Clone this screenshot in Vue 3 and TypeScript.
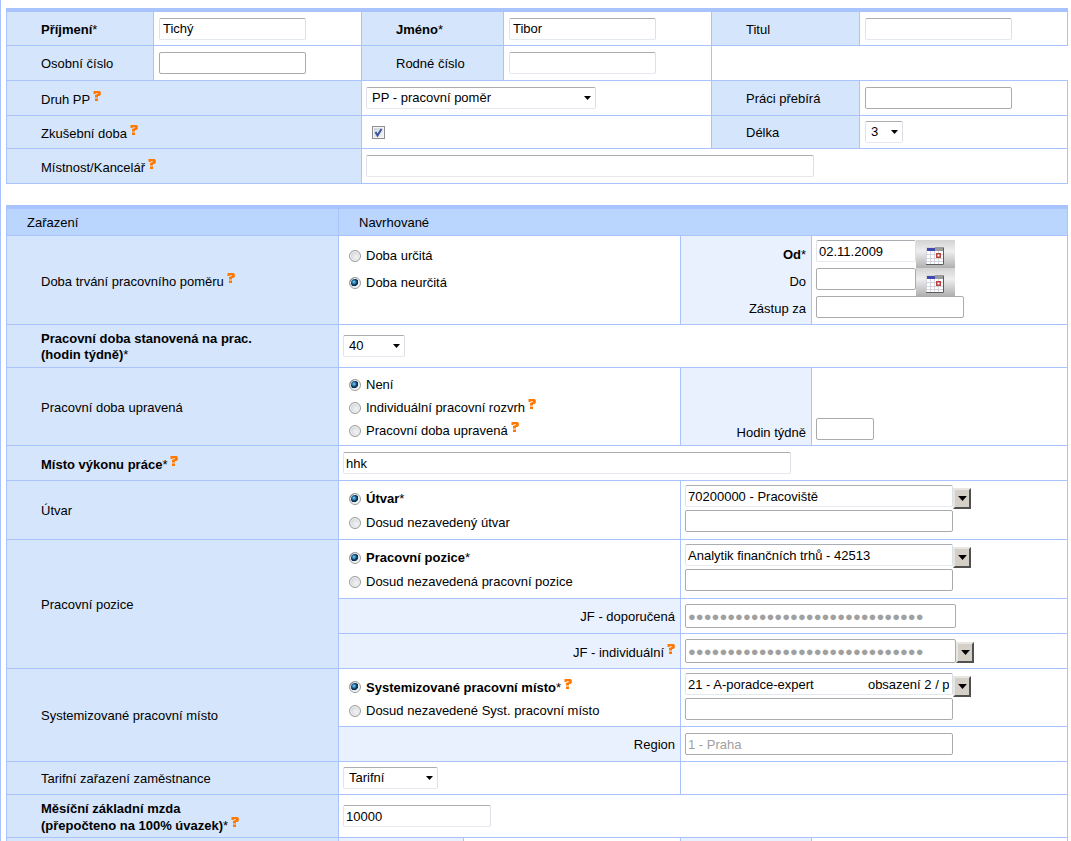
<script setup lang="ts">
import { defineComponent, h, reactive } from 'vue'

interface Option {
  value: string
  label: string
}

const form = reactive({
  surname: 'Tichý',
  firstName: 'Tibor',
  title: '',
  personalNumber: '',
  birthNumber: '',
  contractType: 'pp',
  takesOverFrom: '',
  trial: true,
  trialLength: '3',
  room: '',
  duration: 'indefinite',
  from: '02.11.2009',
  to: '',
  substituteFor: '',
  weeklyHours: '40',
  adjustment: 'none',
  adjustedHours: '',
  workplace: 'hhk',
  unitMode: 'existing',
  unit: '70200000 - Pracoviště',
  newUnit: '',
  positionMode: 'existing',
  position: 'Analytik finančních trhů - 42513',
  newPosition: '',
  slotMode: 'existing',
  slot: '21 - A-poradce-expert' + '\u00a0'.repeat(15) + 'obsazení 2 / plán 3',
  newSlot: '',
  region: '1 - Praha',
  tariff: 'tariff',
  salary: '10000',
})

const masked = '●'.repeat(30)

const contractTypes: Option[] = [{ value: 'pp', label: 'PP - pracovní poměr' }]
const trialLengths: Option[] = [1, 2, 3].map((n) => ({ value: String(n), label: String(n) }))
const hourOptions: Option[] = [20, 30, 40].map((n) => ({ value: String(n), label: String(n) }))
const tariffs: Option[] = [{ value: 'tariff', label: 'Tarifní' }]

const HelpMark = defineComponent({
  setup: () => () =>
    h('svg', { class: 'help', viewBox: '0 0 8 10', width: 8, height: 10, 'aria-label': 'Nápověda' }, [
      h('path', { d: 'M0.5 0H6.6L7.8 1V3.8L6.6 5H5V6.4H2V4L4.8 3V2.2H2.6V3H0.5ZM2 7.4H5V10H2Z', fill: '#ff7800' }),
    ]),
})

const CalendarIcon = defineComponent({
  setup: () => () =>
    h('svg', { class: 'calendar', viewBox: '0 0 19 18', width: 19, height: 18, 'aria-hidden': 'true' }, [
      h('path', { d: 'M0 0H18V18H0Z', fill: '#fff' }),
      h('path', { d: 'M1 1H9V4H1Z', fill: '#3f48b0' }),
      h('path', { d: 'M9 0H18V4H9Z', fill: '#9b9b9b' }),
      h('path', { d: 'M0 7.5H17M0 11.5H17M0 14.5H17M4.5 4V17M8.5 4V17M12.5 4V17M0.5 0V17M0 0.5H9', stroke: '#d4d4dc', fill: 'none' }),
      h('path', { d: 'M17.5 1V17.5H0', stroke: '#5c5c5c', 'stroke-width': 1, fill: 'none' }),
      h('path', { d: 'M10.75 6.75H14.25V10.25H10.75Z', stroke: '#b8433f', 'stroke-width': 1.5, fill: '#fff' }),
    ]),
})

const Arrow = defineComponent({
  setup: () => () =>
    h('svg', { class: 'arrow', viewBox: '0 0 7 4', width: 7, height: 4, 'aria-hidden': 'true' }, [
      h('path', { d: 'M0 0H7L3.5 4Z', fill: '#000' }),
    ]),
})
</script>

<template>
  <main class="page">
    <form @submit.prevent>
      <section class="sheet person">
        <label class="cell name" for="surname"><span><b>Příjmení</b>*</span></label>
        <div class="cell value inset"><input id="surname" v-model="form.surname" class="box w-mid soft" type="text" /></div>
        <label class="cell name" for="first"><span><b>Jméno</b>*</span></label>
        <div class="cell value inset"><input id="first" v-model="form.firstName" class="box w-mid soft" type="text" /></div>
        <label class="cell name" for="title">Titul</label>
        <div class="cell value inset"><input id="title" v-model="form.title" class="box w-mid soft" type="text" /></div>

        <label class="cell name" for="number">Osobní číslo</label>
        <div class="cell value inset"><input id="number" v-model="form.personalNumber" class="box w-mid" type="text" /></div>
        <label class="cell name" for="birth">Rodné číslo</label>
        <div class="cell value inset"><input id="birth" v-model="form.birthNumber" class="box w-mid soft" type="text" /></div>
        <div class="cell value open span-2"></div>

        <label class="cell name span-2" for="contract"><span>Druh PP<HelpMark /></span></label>
        <div class="cell value span-2">
          <span class="pick w-contract">
            <select id="contract" v-model="form.contractType">
              <option v-for="o in contractTypes" :key="o.value" :value="o.value">{{ o.label }}</option>
            </select>
            <Arrow />
          </span>
        </div>
        <label class="cell name" for="takes">Práci přebírá</label>
        <div class="cell value inset"><input id="takes" v-model="form.takesOverFrom" class="box w-mid" type="text" /></div>

        <label class="cell name span-2" for="trial"><span>Zkušební doba<HelpMark /></span></label>
        <div class="cell value span-2">
          <span class="tick">
            <input id="trial" v-model="form.trial" type="checkbox" />
            <svg v-if="form.trial" viewBox="0 0 13 13" width="13" height="13" aria-hidden="true">
              <path d="M3.5 6L5.5 9.5L9.5 3" fill="none" stroke="#3b5599" stroke-width="2" />
            </svg>
          </span>
        </div>
        <label class="cell name" for="length">Délka</label>
        <div class="cell value inset">
          <span class="pick w-length">
            <select id="length" v-model="form.trialLength">
              <option v-for="o in trialLengths" :key="o.value" :value="o.value">{{ o.label }}</option>
            </select>
            <Arrow />
          </span>
        </div>

        <label class="cell name span-2" for="room"><span>Místnost/Kancelář<HelpMark /></span></label>
        <div class="cell value span-4"><input id="room" v-model="form.room" class="box w-wide soft" type="text" /></div>
      </section>

      <section class="sheet placement">
        <div class="cell head">Zařazení</div>
        <div class="cell head span-4">Navrhované</div>

        <div class="cell name"><span>Doba trvání pracovního poměru<HelpMark /></span></div>
        <div class="cell choices airy span-2">
          <label><input v-model="form.duration" type="radio" name="duration" value="fixed" />Doba určitá</label>
          <label><input v-model="form.duration" type="radio" name="duration" value="indefinite" />Doba neurčitá</label>
        </div>
        <div class="cell side stack">
          <label for="from"><b>Od</b>*</label>
          <label for="to">Do</label>
          <label for="substitute">Zástup za</label>
        </div>
        <div class="cell value fields">
          <div class="joined">
            <input id="from" v-model="form.from" class="box w-date soft" type="text" />
            <button class="date" type="button" aria-label="Vybrat datum od"><CalendarIcon /></button>
          </div>
          <div class="joined">
            <input id="to" v-model="form.to" class="box w-date" type="text" />
            <button class="date" type="button" aria-label="Vybrat datum do"><CalendarIcon /></button>
          </div>
          <input id="substitute" v-model="form.substituteFor" class="box w-mid" type="text" />
        </div>

        <label class="cell name" for="hours"><span><b>Pracovní doba stanovená na prac.<br />(hodin týdně)</b>*</span></label>
        <div class="cell value span-4">
          <span class="pick w-hours">
            <select id="hours" v-model="form.weeklyHours">
              <option v-for="o in hourOptions" :key="o.value" :value="o.value">{{ o.label }}</option>
            </select>
            <Arrow />
          </span>
        </div>

        <div class="cell name">Pracovní doba upravená</div>
        <div class="cell choices dense span-2">
          <label><input v-model="form.adjustment" type="radio" name="adjust" value="none" />Není</label>
          <label><input v-model="form.adjustment" type="radio" name="adjust" value="individual" /><span>Individuální pracovní rozvrh<HelpMark /></span></label>
          <label><input v-model="form.adjustment" type="radio" name="adjust" value="adjusted" /><span>Pracovní doba upravená<HelpMark /></span></label>
        </div>
        <label class="cell side low" for="adjusted">Hodin týdně</label>
        <div class="cell value low"><input id="adjusted" v-model="form.adjustedHours" class="box w-short" type="text" /></div>

        <label class="cell name" for="place"><span><b>Místo výkonu práce</b>*<HelpMark /></span></label>
        <div class="cell value span-4"><input id="place" v-model="form.workplace" class="box w-wide soft" type="text" /></div>

        <div class="cell name">Útvar</div>
        <div class="cell choices span-2">
          <label><input v-model="form.unitMode" type="radio" name="unit" value="existing" /><span><b>Útvar</b>*</span></label>
          <label><input v-model="form.unitMode" type="radio" name="unit" value="new" />Dosud nezavedený útvar</label>
        </div>
        <div class="cell value fields span-2">
          <div class="combo">
            <input v-model="form.unit" class="box w-long soft" type="text" aria-label="Útvar" />
            <button class="drop" type="button" aria-label="Vybrat útvar"><Arrow /></button>
          </div>
          <input v-model="form.newUnit" class="box w-long" type="text" aria-label="Nezavedený útvar" />
        </div>

        <div class="cell name rows-3">Pracovní pozice</div>
        <div class="cell choices span-2">
          <label><input v-model="form.positionMode" type="radio" name="position" value="existing" /><span><b>Pracovní pozice</b>*</span></label>
          <label><input v-model="form.positionMode" type="radio" name="position" value="new" />Dosud nezavedená pracovní pozice</label>
        </div>
        <div class="cell value fields span-2">
          <div class="combo">
            <input v-model="form.position" class="box w-long soft" type="text" aria-label="Pracovní pozice" />
            <button class="drop" type="button" aria-label="Vybrat pozici"><Arrow /></button>
          </div>
          <input v-model="form.newPosition" class="box w-long" type="text" aria-label="Nezavedená pozice" />
        </div>

        <label class="cell side span-2" for="jf-rec">JF - doporučená</label>
        <div class="cell value span-2"><input id="jf-rec" class="box w-masked" type="text" :value="masked" disabled /></div>
        <label class="cell side span-2" for="jf-ind"><span>JF - individuální<HelpMark /></span></label>
        <div class="cell value span-2">
          <div class="combo single">
            <input id="jf-ind" class="box w-masked" type="text" :value="masked" disabled />
            <button class="drop" type="button" aria-label="Vybrat JF"><Arrow /></button>
          </div>
        </div>

        <div class="cell name rows-2">Systemizované pracovní místo</div>
        <div class="cell choices span-2">
          <label><input v-model="form.slotMode" type="radio" name="slot" value="existing" /><span><b>Systemizované pracovní místo</b>*<HelpMark /></span></label>
          <label><input v-model="form.slotMode" type="radio" name="slot" value="new" />Dosud nezavedené Syst. pracovní místo</label>
        </div>
        <div class="cell value fields span-2">
          <div class="combo">
            <input v-model="form.slot" class="box w-long soft" type="text" aria-label="Systemizované místo" />
            <button class="drop" type="button" aria-label="Vybrat místo"><Arrow /></button>
          </div>
          <input v-model="form.newSlot" class="box w-long" type="text" aria-label="Nezavedené místo" />
        </div>

        <label class="cell side span-2" for="region">Region</label>
        <div class="cell value span-2"><input id="region" class="box w-long" type="text" :value="form.region" disabled /></div>

        <label class="cell name" for="tariff">Tarifní zařazení zaměstnance</label>
        <div class="cell value span-2">
          <span class="pick w-tariff">
            <select id="tariff" v-model="form.tariff">
              <option v-for="o in tariffs" :key="o.value" :value="o.value">{{ o.label }}</option>
            </select>
            <Arrow />
          </span>
        </div>
        <div class="cell value span-2"></div>

        <label class="cell name" for="salary"><span><b>Měsíční základní mzda<br />(přepočteno na 100% úvazek)</b>*<HelpMark /></span></label>
        <div class="cell value span-4"><input id="salary" v-model="form.salary" class="box w-mid soft" type="text" /></div>

        <div class="cell name"></div>
        <div class="cell side"></div>
        <div class="cell value"></div>
        <div class="cell side"></div>
        <div class="cell value"></div>
      </section>
    </form>
  </main>
</template>

<style>
body {
  margin: 0;
  background: #fff;
}
</style>

<style scoped>
.page {
  box-sizing: border-box;
  min-height: 100vh;
  padding: 8px 3px 0 5px;
  border-left: 1px solid #a9c3ff;
  font-family: "Liberation Sans", Arial, sans-serif;
  font-size: 13px;
  line-height: 16px;
  color: #000;
}

form {
  display: grid;
  gap: 21px;
}

.sheet {
  display: grid;
  border-top: 4px solid #a9c3ff;
  border-left: 1px solid #a9c3ff;
}

.person {
  grid-template-columns: 147px 1fr 142px 1fr 148px 1fr;
  grid-template-rows: 34px 35px 35px 33px 35px;
}

.placement {
  grid-template-columns: 332px 125px 217px 131px 1fr;
  grid-template-rows: 27px 89px 43px 78px 35px 59px 59px 35px 35px 58px 35px 33px 43px 3px;
}

.cell {
  box-sizing: border-box;
  display: flex;
  align-items: center;
  min-width: 0;
  border-right: 1px solid #a9c3ff;
  border-bottom: 1px solid #a9c3ff;
}

.placement > .cell:nth-last-child(-n + 5) {
  border-bottom: 0;
}

.person > .open {
  border-right: 0;
}

.span-2 {
  grid-column: span 2;
}

.span-4 {
  grid-column: span 4;
}

.rows-2 {
  grid-row: span 2;
}

.rows-3 {
  grid-row: span 3;
}

.name {
  padding: 2px 0 0 34px;
  background: #d5e5fb;
}

.head {
  padding: 2px 0 0 20px;
  background: #bad6ff;
}

.side {
  justify-content: flex-end;
  padding: 2px 5px 0 0;
  background: #eaf1fe;
}

.value {
  padding-left: 4px;
}

.inset {
  padding-left: 5px;
}

.stack {
  flex-direction: column;
  align-items: flex-end;
  justify-content: flex-start;
  padding-top: 5px;
  line-height: 27px;
}

.fields {
  flex-direction: column;
  align-items: flex-start;
  padding-top: 4px;
}

.low {
  align-items: flex-end;
  padding-bottom: 4px;
}

.value.low {
  padding-bottom: 5px;
}

.choices {
  flex-direction: column;
  align-items: flex-start;
  padding: 6px 0 0 10px;
}

.choices label {
  display: flex;
  align-items: center;
  gap: 5px;
  height: 24px;
}

.airy label {
  height: 27px;
}

.dense {
  padding-top: 5px;
}

.dense label {
  height: 23px;
}

.box,
select {
  box-sizing: border-box;
  height: 22px;
  margin: 0;
  border: 1px solid #ababab;
  border-radius: 2px;
  background: #fff;
  font: inherit;
  color: #000;
}

.box {
  padding: 0 3px 0 2px;
}

.inset .box {
  padding-left: 3px;
}

.soft,
select {
  border-color: #abadb3 #dbdfe6 #e3e9ef #e2e3ea;
}

.box:disabled {
  color: #a0a0a0;
}

.w-mid {
  width: 148px;
}

.inset .w-mid {
  width: 147px;
}

.w-wide {
  width: 448px;
}

.w-date {
  width: 100px;
}

.w-long {
  width: 268px;
}

.w-masked {
  width: 271px;
  height: 24px;
}

.w-short {
  width: 58px;
}

.w-hours {
  width: 62px;
}

.w-length {
  width: 38px;
}

.w-tariff {
  width: 95px;
}

.w-contract {
  width: 230px;
}

.pick {
  display: grid;
  align-items: center;
}

.pick > * {
  grid-area: 1 / 1;
}

.pick select {
  width: 100%;
  padding: 0 0 0 5px;
  appearance: none;
}

.pick .arrow {
  justify-self: end;
  margin-right: 5px;
  pointer-events: none;
}

.joined {
  display: flex;
  align-items: flex-start;
}

.date {
  display: flex;
  align-items: center;
  justify-content: center;
  width: 39px;
  height: 28px;
  margin: 0;
  padding: 3px 0 0;
  border: 0;
  background: linear-gradient(#d2d2d2, #eeeeee 40%, #b0b0b0);
}

.combo {
  display: flex;
  align-items: flex-start;
  height: 25px;
}

.single {
  height: 24px;
}

.drop {
  box-sizing: border-box;
  display: flex;
  align-items: center;
  justify-content: center;
  width: 18px;
  height: 21px;
  margin: 3px 0 0;
  padding: 0;
  border: 2px solid;
  border-color: #e8e6e2 #505050 #505050 #e8e6e2;
  background: #d4d0c8;
}

.drop .arrow {
  width: 9px;
  height: 5px;
}

.help {
  margin-left: 3px;
  vertical-align: 3px;
}

.tick {
  display: grid;
  margin-left: 6px;
}

.tick > * {
  grid-area: 1 / 1;
}

.tick svg {
  pointer-events: none;
}

.tick input {
  box-sizing: border-box;
  width: 13px;
  height: 13px;
  margin: 0;
  border: 1px solid #8e8f8f;
  background: linear-gradient(135deg, #c9d0dc, #f6f7fa);
  box-shadow: inset 0 0 0 1px #f4f4f4;
  appearance: none;
}

.choices input {
  box-sizing: border-box;
  width: 12px;
  height: 12px;
  margin: 0;
  border: 1px solid #9a9b9b;
  border-radius: 50%;
  background: radial-gradient(circle at 60% 60%, #f4f4f4, #c4c8cc);
  box-shadow: inset 0 0 0 1px #f4f4f4;
  appearance: none;
}

.choices input:checked {
  background: radial-gradient(circle at 40% 40%, #8fd6f5 0, #2a7fb0 20%, #10304f 36%, #10304f 46%, #eef2f5 54%);
}
</style>
